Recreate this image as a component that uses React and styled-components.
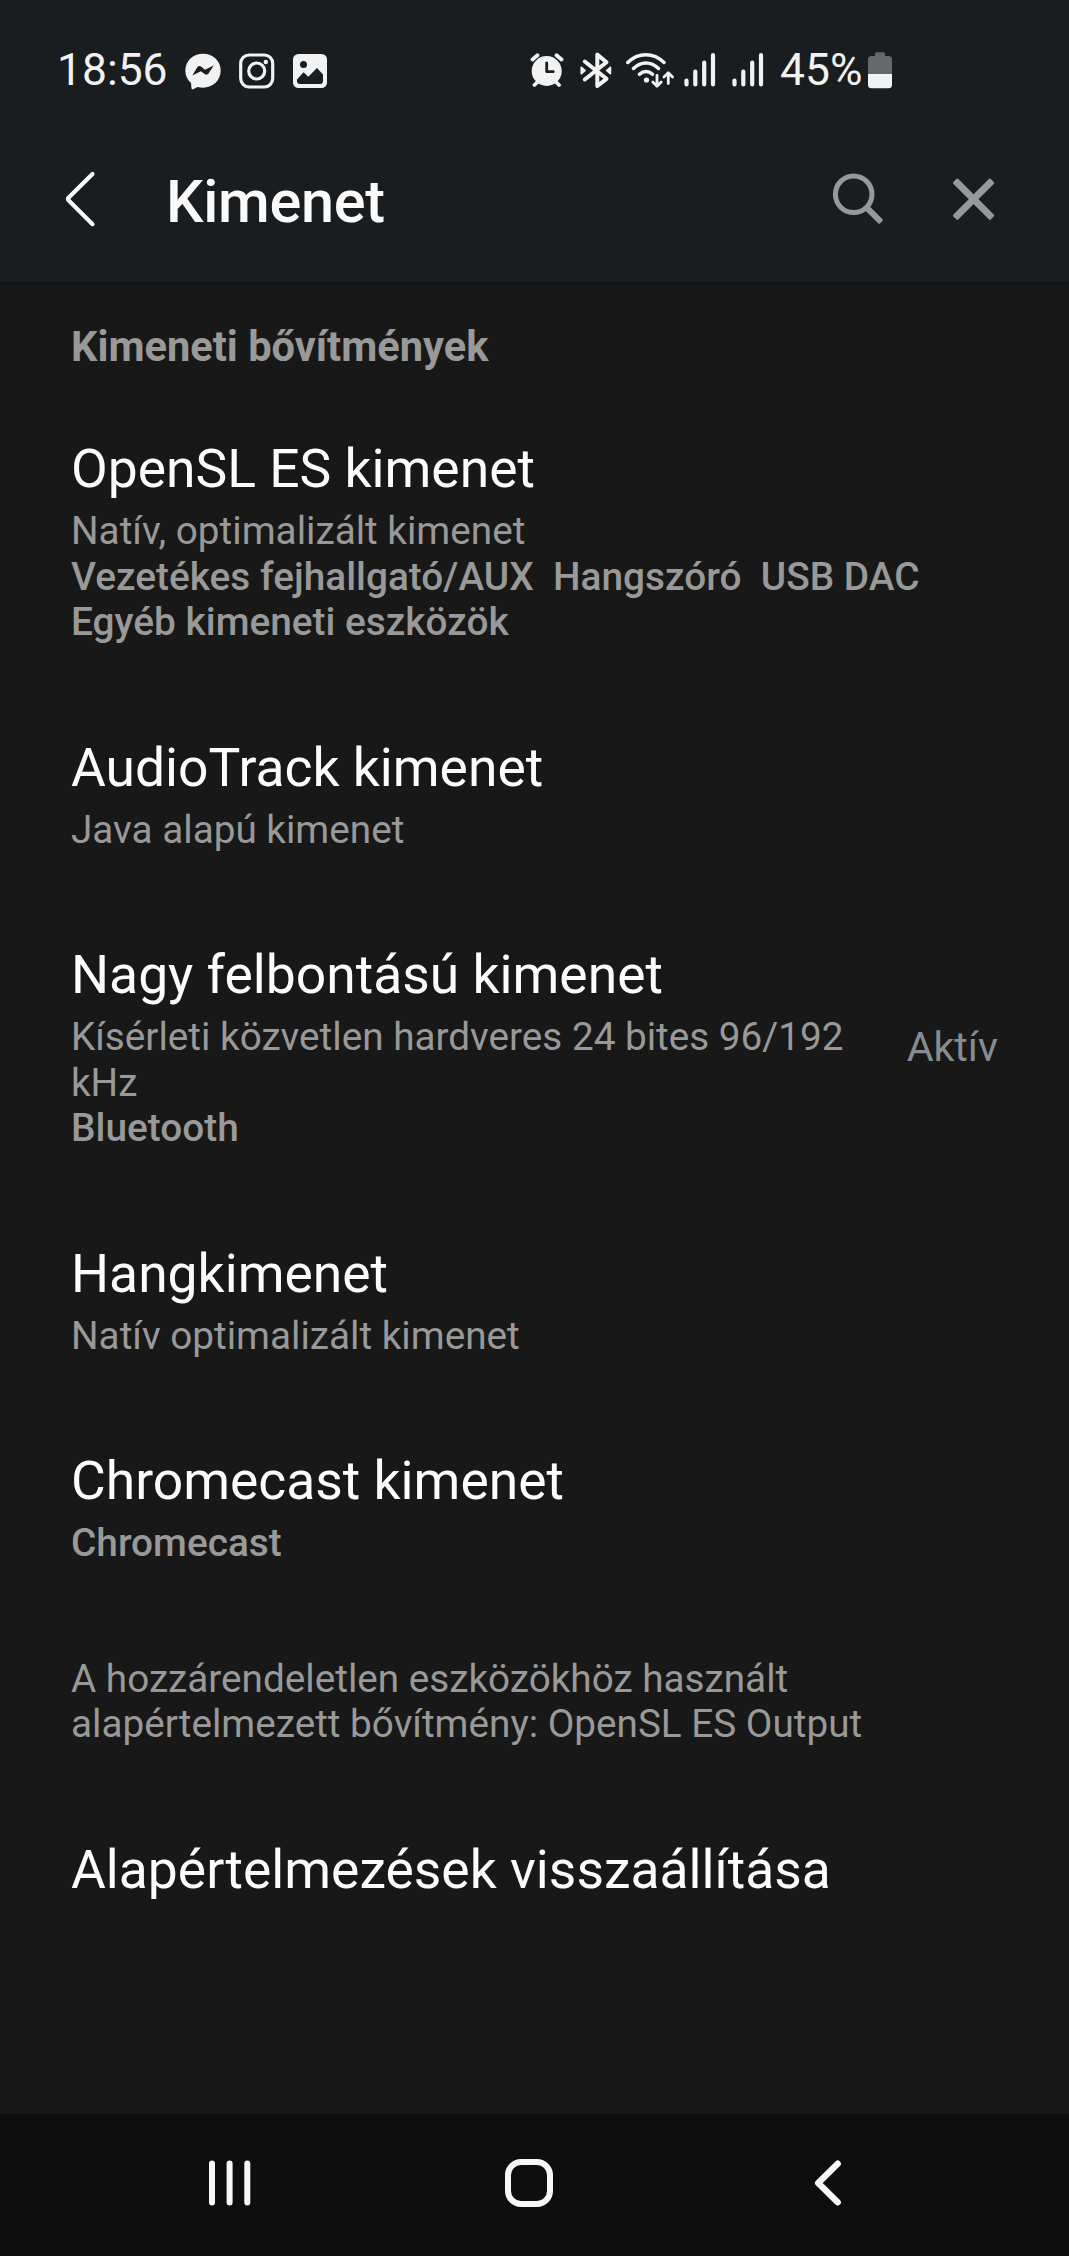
import React from 'react';
import styled, { createGlobalStyle } from 'styled-components';

const GlobalStyle = createGlobalStyle`
  * {
    box-sizing: border-box;
  }
  body {
    margin: 0;
    background: #181818;
    font-family: Roboto, "Noto Sans", sans-serif;
  }
`;

const Screen = styled.div`
  display: flex;
  flex-direction: column;
  height: 2256px;
  width: 1069px;
  overflow: hidden;
  background: #181818;
`;

const Header = styled.header`
  height: 282px;
  flex: none;
  background: #1a1d20;
  box-shadow: 0 1px 4px rgba(0, 0, 0, 0.5);
`;

const StatusBar = styled.div`
  display: flex;
  justify-content: space-between;
  height: 140px;
  padding: 50px 177px 0 57px;
`;

const StatusGroup = styled.div`
  display: flex;
  align-items: flex-start;
  height: 40px;
  color: #f2f2f2;
`;

const StatusText = styled.span`
  margin-left: ${({ $gap }) => $gap || 0}px;
  width: ${({ $width }) => $width}px;
  font-size: 44.4px;
  line-height: 40px;
  white-space: nowrap;
`;

const Icon = styled.svg`
  flex: none;
  display: block;
  margin-left: ${({ $gap }) => $gap || 0}px;
  fill: none;
  stroke-linecap: round;
  stroke-linejoin: round;
`;

const TitleBar = styled.div`
  display: flex;
  align-items: center;
  height: 120px;
  padding: 0 73px 0 64px;
`;

const Title = styled.h1`
  flex: 1;
  margin: 0 0 0 70px;
  padding-top: 3px;
  font-size: 59.4px;
  line-height: 70px;
  font-weight: 500;
  letter-spacing: -0.3px;
  color: #fafafa;
`;

const List = styled.main`
  flex: 1;
  padding: 39px 71px 0;
`;

const SectionLabel = styled.h2`
  margin: 0 0 19px;
  font-size: 41.6px;
  line-height: 52px;
  font-weight: 700;
  color: #999;
`;

const Row = styled.div`
  display: flex;
  align-items: center;
  justify-content: space-between;
  gap: 48px;
  padding: 46px 0;
`;

const RowTitle = styled.div`
  font-size: 53.4px;
  line-height: 62px;
  color: #fcfcfc;
`;

const Summary = styled.div`
  margin-top: 8px;
  font-size: 38.7px;
  line-height: 45.5px;
  color: #999;
`;

const Devices = styled.div`
  font-size: 38.8px;
  font-weight: 500;
  white-space: pre-wrap;
`;

const Value = styled.span`
  flex: none;
  font-size: 41.2px;
  line-height: 47px;
  color: #868d92;
`;

const Note = styled.p`
  margin: 44px 0 46px;
  font-size: 38.7px;
  line-height: 45.5px;
  color: #999;
`;

const NavBar = styled.nav`
  flex: none;
  display: flex;
  align-items: center;
  height: 142px;
  padding: 0 0 5px 207px;
  background: #0e0e0e;
`;

const outputs = [
  {
    title: 'OpenSL ES kimenet',
    summary: 'Natív, optimalizált kimenet',
    devices: 'Vezetékes fejhallgató/AUX  Hangszóró  USB DAC\nEgyéb kimeneti eszközök',
  },
  { title: 'AudioTrack kimenet', summary: 'Java alapú kimenet' },
  {
    title: 'Nagy felbontású kimenet',
    summary: 'Kísérleti közvetlen hardveres 24 bites 96/192 kHz',
    devices: 'Bluetooth',
    value: 'Aktív',
  },
  { title: 'Hangkimenet', summary: 'Natív optimalizált kimenet' },
  { title: 'Chromecast kimenet', devices: 'Chromecast' },
];

const MessengerIcon = () => (
  <Icon $gap={18} width="36" height="40">
    <path
      d="M18 3.7C8 3.7.3 11 .3 20.6c0 5 2.100 9.400 5.700 12.500l.5 5.200c.1.900 1 1.300 1.700.9l4.300-2.300c1.800.5 3.600.8 5.500.8 10 0 17.700-7.300 17.700-17.100S28 3.700 18 3.700z"
      fill="currentColor"
    />
    <path d="M7.300 25.500l5-8.200c.8-1.300 2.400-1.600 3.600-.700l4.100 3.100 8.700-4.300-5.200 8.200c-.8 1.200-2.400 1.500-3.500.7l-4.100-3.100z" fill="#1a1d20" />
  </Icon>
);

const InstagramIcon = () => (
  <Icon $gap={18} width="36" height="40" stroke="currentColor" strokeWidth="3.200">
    <rect x="1.700" y="5" width="32" height="32" rx="8.500" />
    <circle cx="17.700" cy="21" r="8" />
    <circle cx="26.800" cy="12" r="2.200" fill="currentColor" stroke="none" />
  </Icon>
);

const GalleryIcon = () => (
  <Icon $gap={18} width="36" height="40">
    <rect x="0" y="4" width="34" height="34" rx="5.500" fill="currentColor" />
    <circle cx="10.500" cy="14.500" r="3.500" fill="#1a1d20" />
    <path d="M4 29.500l6.500-7.300 4.800 4.600 8.700-8.800 6 6.500v6.500a3 3 0 0 1-3 3H7a3 3 0 0 1-3-3z" fill="#1a1d20" />
  </Icon>
);

const AlarmIcon = () => (
  <Icon width="34" height="40" stroke="currentColor" strokeWidth="3.800">
    <circle cx="16.700" cy="21" r="15" fill="currentColor" stroke="none" />
    <path d="M2.500 9.500l5-4.300M26.500 5.200l5 4.300M7.500 32l-3 3M26 32l3 3" />
    <path d="M16.700 13v8.700h6.500" stroke="#1a1d20" strokeWidth="2.800" />
  </Icon>
);

const BluetoothIcon = () => (
  <Icon $gap={16} width="34" height="40" stroke="currentColor" strokeWidth="4">
    <path d="M4.800 11.500l21.700 17.300-9.200 7.200V4.600l9.200 7.600L4.800 29.500" />
    <path d="M1.200 17.200v6.600l4-3.300zM30.500 17.200v6.600l-4-3.300z" fill="currentColor" strokeWidth="1.500" />
  </Icon>
);

const WifiIcon = () => (
  <Icon $gap={12} width="50" height="40" stroke="currentColor" strokeWidth="3.500">
    <path d="M1.800 12.500C12 2 27.500 2 38 12.500M7.500 18.500c7.500-7.500 17.500-7.500 25 0M13.500 24.300c4-3.700 9-3.700 13 0" />
    <circle cx="20.500" cy="30" r="2.600" fill="currentColor" stroke="none" />
    <path d="M31 25.500v10.500M26.800 32l4.200 4.200 4.200-4.200M42.300 33.500V23M38 27l4.300-4.200L46.600 27" strokeWidth="2.800" />
  </Icon>
);

const SignalIcon = ({ gap }) => (
  <Icon $gap={gap} width="34" height="40" stroke="currentColor" strokeWidth="4.200">
    <path d="M2.500 30.500v4M11.300 21.500v13M20.200 12.500v22M29 5v29.500" />
  </Icon>
);

const BatteryIcon = () => (
  <Icon width="24" height="40">
    <path d="M7 6V4c0-1 .8-1.800 1.800-1.800h6.400c1 0 1.800.8 1.800 1.800v2h3.500A3.500 3.500 0 0 1 24 9.500V24H0V9.500A3.500 3.500 0 0 1 3.500 6z" fill="#66696b" />
    <path d="M0 24h24v10.700a3.500 3.500 0 0 1-3.500 3.500h-17A3.500 3.500 0 0 1 0 34.700z" fill="currentColor" />
  </Icon>
);

const App = () => {
  return (
    <Screen>
      <GlobalStyle />
      <Header>
        <StatusBar>
          <StatusGroup>
            <StatusText $width={110}>18:56</StatusText>
            <MessengerIcon />
            <InstagramIcon />
            <GalleryIcon />
          </StatusGroup>
          <StatusGroup>
            <AlarmIcon />
            <BluetoothIcon />
            <WifiIcon />
            <SignalIcon gap={8} />
            <SignalIcon gap={14} />
            <StatusText $gap={14} $width={88}>45%</StatusText>
            <BatteryIcon />
          </StatusGroup>
        </StatusBar>
        <TitleBar>
          <Icon width="32" height="60" stroke="#fafafa" strokeWidth="4.200">
            <path d="M28.500 4L4.500 27.800q-1.200 1.200 0 2.400l24 24" />
          </Icon>
          <Title>Kimenet</Title>
          <Icon width="54" height="54">
            <circle cx="21.700" cy="21.300" r="18.300" stroke="#96999b" strokeWidth="5" />
            <rect x="19" y="-3" width="20" height="6" rx="1.500" fill="#96999b" transform="translate(21.700 21.700) rotate(45)" />
          </Icon>
          <Icon $gap={66} width="44" height="44">
            <g fill="#96999b" transform="translate(21.600 21.200) rotate(45)">
              <rect x="-26.500" y="-3.500" width="53" height="7" rx="1.500" />
              <rect x="-3.500" y="-26.500" width="7" height="53" rx="1.500" />
            </g>
          </Icon>
        </TitleBar>
      </Header>
      <List>
        <SectionLabel>Kimeneti bővítmények</SectionLabel>
        {outputs.map((item) => (
          <Row key={item.title}>
            <div>
              <RowTitle>{item.title}</RowTitle>
              <Summary>
                {item.summary}
                {item.devices && <Devices>{item.devices}</Devices>}
              </Summary>
            </div>
            {item.value && <Value>{item.value}</Value>}
          </Row>
        ))}
        <Note>
          A hozzárendeletlen eszközökhöz használt alapértelmezett bővítmény: OpenSL ES Output
        </Note>
        <Row>
          <RowTitle>Alapértelmezések visszaállítása</RowTitle>
        </Row>
      </List>
      <NavBar>
        <Icon width="46" height="48" stroke="#f7f7f7" strokeWidth="6">
          <path d="M5 4.500v39M22.600 4.500v39M40.300 4.500v39" />
        </Icon>
        <Icon $gap={251} width="50" height="50" stroke="#f7f7f7" strokeWidth="6">
          <rect x="4" y="4" width="42" height="42" rx="13" />
        </Icon>
        <Icon $gap={259} width="30" height="48" stroke="#f7f7f7" strokeWidth="6.400">
          <path d="M24.700 4.700L5.200 24l19.500 19.300" />
        </Icon>
      </NavBar>
    </Screen>
  );
};

export default App;
